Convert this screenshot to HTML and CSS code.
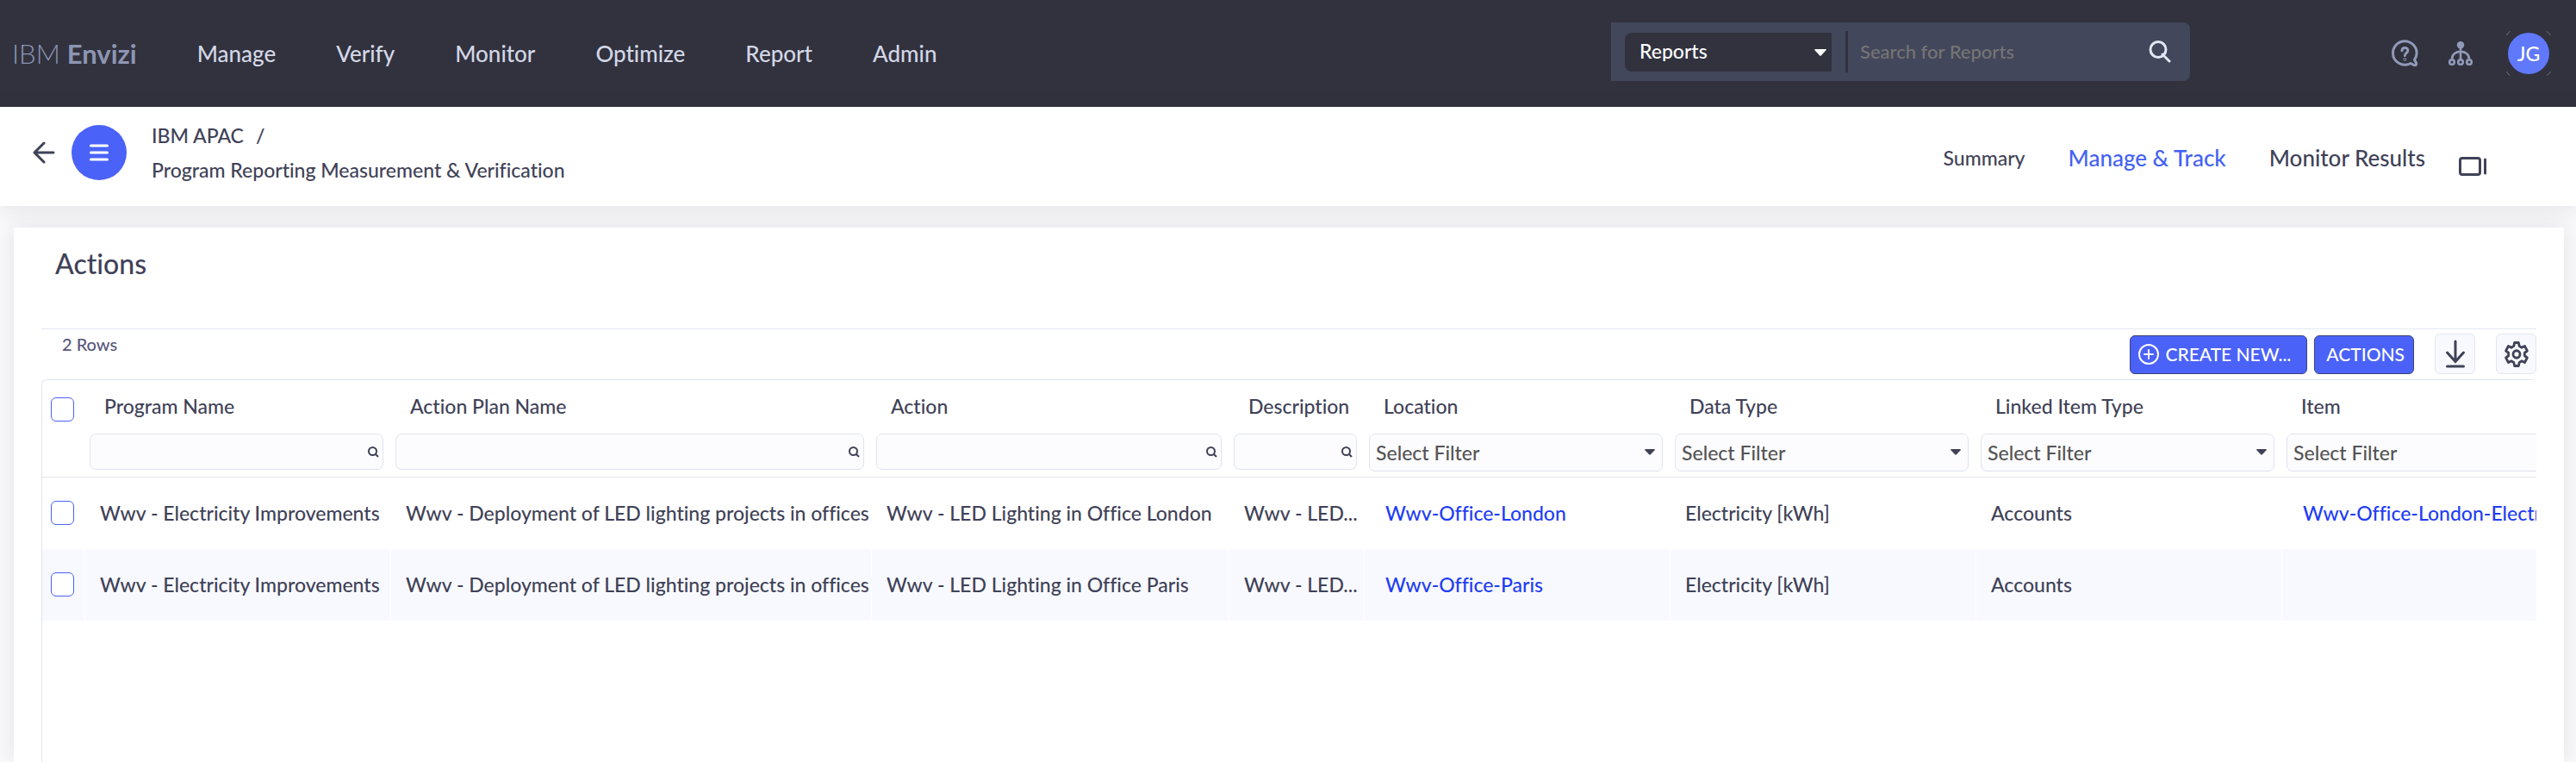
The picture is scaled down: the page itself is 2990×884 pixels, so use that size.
FILE: index.html
```html
<!DOCTYPE html>
<html lang="en">
<head>
<meta charset="utf-8">
<title>IBM Envizi - Actions</title>
<link rel="stylesheet" href="styles.css">
</head>
<body>
<svg class="sprite" aria-hidden="true">
  <symbol id="search" viewBox="0 0 26 26"><path d="M16 16l8 8M20 10.500a9 9 0 1 1-18 0a9 9 0 1 1 18 0z" fill="none" stroke="currentColor" stroke-width="3" stroke-linecap="round"/></symbol>
  <symbol id="search-small" viewBox="0 0 13 13"><path d="M8.500 8.500l3.500 3.500M10 5.500a4.500 4.500 0 1 1-9 0a4.500 4.500 0 1 1 9 0z" fill="none" stroke="currentColor" stroke-width="2"/></symbol>
  <symbol id="caret" viewBox="0 0 14 8"><path d="M1 0h12q1.500 0 .5 1.300L8 7.300q-1 1-2 0L.5 1.300Q-.5 0 1 0z" fill="currentColor"/></symbol>
</svg>

<header class="topbar">
  <a class="brand" href="#"><span class="brand-light">IBM</span> <b>Envizi</b></a>
  <nav class="mainnav">
    <a href="#">Manage</a>
    <a href="#">Verify</a>
    <a href="#">Monitor</a>
    <a href="#">Optimize</a>
    <a href="#">Report</a>
    <a href="#">Admin</a>
  </nav>
  <form class="search">
    <div class="scope">
      <select class="scope-select" aria-label="Search in"><option>Reports</option></select>
      <svg class="scope-caret"><use href="#caret"/></svg>
    </div>
    <span class="search-divider"></span>
    <input class="search-input" type="text" placeholder="Search for Reports" aria-label="Search for Reports">
    <button class="search-button" type="button" aria-label="Search"><svg class="search-icon"><use href="#search"/></svg></button>
  </form>
  <div class="tools">
    <button class="tool" type="button" aria-label="Help">
      <svg width="31" height="32" viewBox="0 0 31 32" fill="none" stroke="currentColor" stroke-width="3" stroke-linecap="round" stroke-linejoin="round"><path d="M22 27.500C13 32.500 1.500 26 1.500 15.500a13.800 13.800 0 0 1 27.600 0c0 3.200-1 5.800-2.600 8l2 3.500c.6 2-.5 3-2.200 2.600z"/><path d="M12 12.800c0-4.500 6.800-4.500 6.800-.3 0 3-3.400 2.800-3.400 6"/><circle cx="15.400" cy="22.800" r=".4"/></svg>
    </button>
    <button class="tool" type="button" aria-label="Hierarchy">
      <svg width="28" height="28" viewBox="0 0 28 28" fill="none" stroke="currentColor" stroke-width="2.600"><circle cx="14" cy="4.200" r="4.200" fill="currentColor" stroke="none"/><path d="M14 4v17M4 20.500c0-11.500 20-11.500 20 0"/><circle cx="4" cy="24" r="2.800"/><circle cx="14" cy="24" r="2.800"/><circle cx="24" cy="24" r="2.800"/></svg>
    </button>
    <button class="avatar" type="button">JG
      <svg class="avatar-corners" viewBox="0 0 52 52" fill="none" stroke="#6e7078" stroke-width="1"><path d="M.5 5q1-3 4-4.500M47 .5q3 1.500 4.500 4.500M.5 47q1 3 4 4.500M47 51.500q3-1.500 4.500-4.500"/></svg>
    </button>
  </div>
</header>

<div class="subbar">
  <a class="back" href="#" aria-label="Back"><svg width="26" height="26" viewBox="0 0 26 26" fill="none" stroke="currentColor" stroke-width="3" stroke-linecap="round" stroke-linejoin="round"><path d="M24 13H2M13 2L2 13l11 11"/></svg></a>
  <button class="menu" type="button" aria-label="Menu"><svg width="22" height="20" viewBox="0 0 22 20" stroke="currentColor" stroke-width="3" stroke-linecap="round"><path d="M1.500 2h19M1.500 10h19M1.500 18h19"/></svg></button>
  <div class="crumbs">
    <div class="crumb-parent"><a href="#">IBM APAC</a><span>/</span></div>
    <div>Program Reporting Measurement &amp; Verification</div>
  </div>
  <nav class="tabs">
    <a class="tab-small" href="#">Summary</a>
    <a class="tab-active" href="#">Manage &amp; Track</a>
    <a href="#">Monitor Results</a>
    <button class="panel-toggle" type="button" aria-label="Toggle panel"><svg width="33" height="22" viewBox="0 0 33 22" fill="none" stroke="currentColor" stroke-width="3" stroke-linecap="round"><rect x="1.500" y="1.500" width="23" height="19" rx="2.500"/><path d="M30.500 3v16"/></svg></button>
  </nav>
</div>

<main class="card">
  <h1 class="title">Actions</h1>
  <div class="toolbar">
    <span class="count">2 Rows</span>
    <div class="buttons">
      <button class="primary" type="button"><svg width="24" height="24" viewBox="0 0 24 24" fill="none" stroke="currentColor" stroke-width="2" stroke-linecap="round"><circle cx="12" cy="12" r="11"/><path d="M12 7v10M7 12h10"/></svg>CREATE NEW...</button>
      <button class="primary primary-text" type="button">ACTIONS</button>
    </div>
    <button class="square" type="button" aria-label="Download"><svg width="24" height="34" viewBox="0 0 24 34" fill="none" stroke="currentColor" stroke-width="3" stroke-linecap="round"><path d="M12 2v23M2.500 15l9.500 10.500L21.500 15M2.500 31h19"/></svg></button>
    <button class="square" type="button" aria-label="Settings"><svg width="30" height="32" viewBox="0 0 30 30" preserveAspectRatio="none" fill="none" stroke="currentColor" stroke-width="2.800" stroke-linejoin="round"><path d="M12.700 2.300h4.600l.9 3.800 2.900 1.600 3.400-1.600 2.900 5.100-3 2.200v3.200l3 2.200-2.900 5.100-3.400-1.600-2.900 1.600-.9 3.800h-4.600l-.9-3.800-2.900-1.600-3.400 1.600-2.900-5.100 3-2.200v-3.200l-3-2.200 2.900-5.100 3.400 1.600 2.900-1.600z"/><circle cx="15" cy="15" r="4"/></svg></button>
  </div>

  <div class="grid">
    <table class="table">
      <colgroup><col class="c-check"><col class="c-std"><col class="c-plan"><col class="c-action"><col class="c-desc"><col class="c-std"><col class="c-std"><col class="c-std"><col class="c-std"></colgroup>
      <thead>
        <tr>
          <th class="check"><input class="box" type="checkbox" aria-label="Select all"></th>
          <th><div class="name">Program Name</div><div class="filter"><input type="text" aria-label="Filter Program Name"><svg class="filter-icon"><use href="#search-small"/></svg></div></th>
          <th><div class="name">Action Plan Name</div><div class="filter"><input type="text" aria-label="Filter Action Plan Name"><svg class="filter-icon"><use href="#search-small"/></svg></div></th>
          <th><div class="name">Action</div><div class="filter"><input type="text" aria-label="Filter Action"><svg class="filter-icon"><use href="#search-small"/></svg></div></th>
          <th><div class="name">Description</div><div class="filter"><input type="text" aria-label="Filter Description"><svg class="filter-icon"><use href="#search-small"/></svg></div></th>
          <th><div class="name">Location</div><div class="pick"><select aria-label="Filter Location"><option>Select Filter</option></select><svg class="pick-caret"><use href="#caret"/></svg></div></th>
          <th><div class="name">Data Type</div><div class="pick"><select aria-label="Filter Data Type"><option>Select Filter</option></select><svg class="pick-caret"><use href="#caret"/></svg></div></th>
          <th><div class="name">Linked Item Type</div><div class="pick"><select aria-label="Filter Linked Item Type"><option>Select Filter</option></select><svg class="pick-caret"><use href="#caret"/></svg></div></th>
          <th><div class="name">Item</div><div class="pick"><select aria-label="Filter Item"><option>Select Filter</option></select><svg class="pick-caret"><use href="#caret"/></svg></div></th>
        </tr>
      </thead>
      <tbody>
        <tr>
          <td class="check"><input class="box" type="checkbox" aria-label="Select row 1"></td>
          <td>Wwv - Electricity Improvements</td>
          <td>Wwv - Deployment of LED lighting projects in offices</td>
          <td>Wwv - LED Lighting in Office London</td>
          <td>Wwv - LED...</td>
          <td class="link"><a href="#">Wwv-Office-London</a></td>
          <td>Electricity [kWh]</td>
          <td>Accounts</td>
          <td class="link"><a href="#">Wwv-Office-London-Electr</a></td>
        </tr>
        <tr>
          <td class="check"><input class="box" type="checkbox" aria-label="Select row 2"></td>
          <td>Wwv - Electricity Improvements</td>
          <td>Wwv - Deployment of LED lighting projects in offices</td>
          <td>Wwv - LED Lighting in Office Paris</td>
          <td>Wwv - LED...</td>
          <td class="link"><a href="#">Wwv-Office-Paris</a></td>
          <td>Electricity [kWh]</td>
          <td>Accounts</td>
          <td></td>
        </tr>
      </tbody>
    </table>
  </div>
</main>
</body>
</html>
```
FILE: styles.css
```css
* { box-sizing: border-box; }

body {
  margin: 0;
  min-height: 100vh;
  display: flex;
  flex-direction: column;
  background: #f9f9fb;
  color: #3f4257;
  font: 500 23px/24px Lato, "Open Sans", sans-serif;
  font-variant-ligatures: none;
}

a { color: inherit; text-decoration: none; }

button, input, select { font: inherit; color: inherit; margin: 0; }

button { border: 0; padding: 0; background: none; }

svg { display: block; flex: none; }

.sprite { position: absolute; width: 0; height: 0; }

/* Top bar */
.topbar {
  display: flex;
  align-items: center;
  height: 124px;
  padding: 0 31px 0 14px;
  background: #31323e;
  color: #d3d7e6;
}

.brand {
  color: #8d95b2;
  font-size: 31px;
  line-height: 36px;
  white-space: nowrap;
}

.brand-light { font-weight: 300; }

.mainnav {
  display: flex;
  gap: 70px;
  margin-left: 70px;
  font-size: 26px;
}

.search {
  display: flex;
  align-items: center;
  align-self: flex-start;
  width: 672px;
  height: 68px;
  margin: 26px 234px 0 auto;
  padding: 0 22px 0 16px;
  border-radius: 0 8px 8px 0;
  background: #43475b;
}

.scope { position: relative; width: 240px; height: 45px; }

.scope-select {
  width: 100%;
  height: 100%;
  padding: 0 17px 3px;
  border: 0;
  border-radius: 8px 0 0 8px;
  background: #31323e;
  color: #fff;
  appearance: none;
}

.scope-caret {
  position: absolute;
  top: 19px;
  right: 6px;
  width: 14px;
  height: 8px;
  color: #fff;
}

.search-divider { width: 3px; height: 48px; margin-left: 16px; background: #31323e; }

.search-input {
  flex: 1;
  min-width: 0;
  padding: 0 14px;
  border: 0;
  background: none;
  font-size: 22px;
}

.search-input::placeholder { color: #757575; opacity: 1; }

.search-button { color: #e3e7f3; }

.search-icon { width: 26px; height: 26px; }

.tools { display: flex; align-items: center; gap: 35px; }

.tool { color: #919ab8; }

.avatar {
  position: relative;
  width: 48px;
  height: 48px;
  margin-left: 6px;
  border-radius: 50%;
  background: #6078fa;
  color: #fff;
}

.avatar-corners { position: absolute; top: -2px; left: -2px; width: 52px; height: 52px; }

/* Breadcrumb and tabs */
.subbar {
  display: flex;
  align-items: center;
  min-height: 115px;
  padding: 0 103px 9px 38px;
  background: #fff;
  box-shadow: 0 4px 24px rgba(40, 40, 60, .1);
}

.menu {
  display: flex;
  align-items: center;
  justify-content: center;
  width: 64px;
  height: 64px;
  margin-left: 19px;
  border-radius: 50%;
  background: #4a62f8;
  color: #fff;
}

.crumbs { margin-left: 29px; line-height: 40px; }

.crumb-parent { display: flex; gap: 14px; }

.tabs {
  display: flex;
  align-items: center;
  gap: 50px;
  margin-left: auto;
  padding-top: 12px;
  font-size: 26px;
}

.tab-small { font-size: 23px; }

.tab-active { color: #4462f2; }

.panel-toggle { margin: 20px 0 0 -11px; }

/* Actions card */
.card {
  flex: 1;
  margin: 25px 14px 0 16px;
  padding: 22px 32px 0;
  display: flex;
  flex-direction: column;
  background: #fff;
  box-shadow: 0 0 24px rgba(40, 40, 60, .1);
}

.title {
  margin: 0 0 55px 16px;
  font-size: 32px;
  font-weight: 500;
  line-height: 40px;
}

.toolbar {
  display: flex;
  align-items: flex-end;
  gap: 24px;
  padding: 5px 0 6px 24px;
  border-top: 1px solid #e5e8f2;
}

.count {
  align-self: flex-start;
  margin-right: auto;
  color: #5a587c;
  font-size: 20px;
}

.buttons { display: flex; gap: 8px; }

.primary {
  display: flex;
  align-items: center;
  gap: 7px;
  height: 45px;
  padding: 0 18px 2px 9px;
  border: 1px solid #3c4379;
  border-radius: 6px;
  background: #4a62f8;
  color: #fff;
  font-size: 21px;
}

.primary-text { padding: 0 10px 2px 13px; }

.square {
  display: flex;
  align-items: center;
  justify-content: center;
  width: 47px;
  height: 47px;
  border: 1px solid #e3e6f2;
  border-radius: 6px;
  background: #f8f9fe;
}

/* Data grid */
.grid {
  flex: 1;
  overflow: hidden;
  border: solid #e1e4ef;
  border-width: 1px 0 0 1px;
  border-radius: 6px 6px 0 0;
}

.table {
  width: 2954px;
  table-layout: fixed;
  border-collapse: separate;
  border-spacing: 0;
}

.c-check { width: 49px; }
.c-std { width: 355px; }
.c-plan { width: 558px; }
.c-action { width: 415px; }
.c-desc { width: 157px; }

th {
  height: 113px;
  padding: 18px 8px 6px 6px;
  border-bottom: 1px solid #e1e4ef;
  font-weight: 500;
  text-align: left;
  vertical-align: top;
}

th.check { padding: 20px 0 0 10px; }

.name { margin-bottom: 20px; padding-left: 17px; white-space: nowrap; }

.filter {
  display: flex;
  align-items: center;
  height: 42px;
  padding-right: 4px;
  border: 1px solid #e0e3ef;
  border-radius: 7px;
  background: #fcfcfe;
}

.filter input { flex: 1; min-width: 0; border: 0; background: none; }

.filter-icon { width: 13px; height: 13px; }

.pick { position: relative; height: 44px; }

.pick select {
  width: 100%;
  height: 100%;
  padding: 0 7px;
  border: 1px solid #e0e3ef;
  border-radius: 7px;
  background: #fcfcfe;
  color: #555;
  appearance: none;
}

.pick-caret { position: absolute; top: 18px; right: 9px; width: 12px; height: 7px; }

td {
  height: 83px;
  padding: 0 0 2px 17px;
  border-left: 1px solid #fff;
  white-space: nowrap;
}

td.check { padding-left: 10px; border-left: 0; }

td.link { padding-left: 24px; color: #1f3df5; }

tbody tr:nth-child(even) { background: #f8f9fe; }

.box {
  display: block;
  width: 27px;
  height: 28px;
  border: 1px solid #4a62f8;
  border-radius: 6px;
  background: #fff;
  appearance: none;
}
```
